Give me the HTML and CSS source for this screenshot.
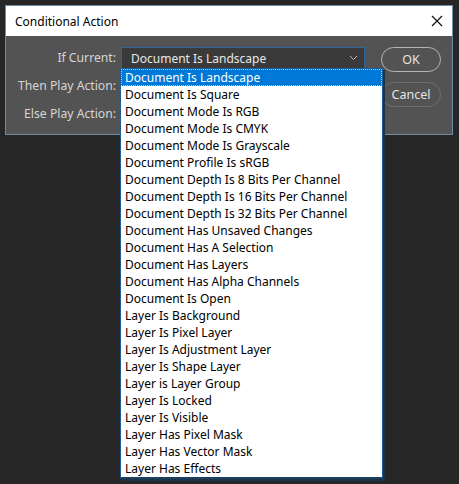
FILE: index.html
```html
<!DOCTYPE html>
<html>
<head>
<meta charset="utf-8">
<link rel="stylesheet" href="styles.css">
</head>
<body>
<div class="dialog">
  <div class="titlebar">
    <span class="title">Conditional Action</span>
    <svg class="close" width="12" height="12" viewBox="0 0 12 12"><path d="M1 1L11 11M11 1L1 11" stroke="#111" stroke-width="1.2" fill="none"/></svg>
  </div>
  <div class="body">
    <div class="form">
      <div class="row"><span class="label">If Current:</span>
        <div class="select"><span>Document Is Landscape</span>
          <svg class="chev" width="9" height="6" viewBox="0 0 9 6"><path d="M1 1L4.5 4.5L8 1" stroke="#bbb" stroke-width="1" fill="none"/></svg>
        </div>
      </div>
      <div class="row"><span class="label">Then Play Action:</span></div>
      <div class="row"><span class="label">Else Play Action:</span></div>
    </div>
    <div class="buttons">
      <div class="btn ok">OK</div>
      <div class="btn cancel">Cancel</div>
    </div>
  </div>
</div>
<ul class="list">
  <li class="sel">Document Is Landscape</li>
  <li>Document Is Square</li>
  <li>Document Mode Is RGB</li>
  <li>Document Mode Is CMYK</li>
  <li>Document Mode Is Grayscale</li>
  <li>Document Profile Is sRGB</li>
  <li>Document Depth Is 8 Bits Per Channel</li>
  <li>Document Depth Is 16 Bits Per Channel</li>
  <li>Document Depth Is 32 Bits Per Channel</li>
  <li>Document Has Unsaved Changes</li>
  <li>Document Has A Selection</li>
  <li>Document Has Layers</li>
  <li>Document Has Alpha Channels</li>
  <li>Document Is Open</li>
  <li>Layer Is Background</li>
  <li>Layer Is Pixel Layer</li>
  <li>Layer Is Adjustment Layer</li>
  <li>Layer Is Shape Layer</li>
  <li>Layer is Layer Group</li>
  <li>Layer Is Locked</li>
  <li>Layer Is Visible</li>
  <li>Layer Has Pixel Mask</li>
  <li>Layer Has Vector Mask</li>
  <li>Layer Has Effects</li>
</ul>
</body>
</html>
```

FILE: styles.css
```css
html, body {
  margin: 0;
  padding: 0;
  background: #262626;
  width: 459px;
  height: 484px;
  overflow: hidden;
  font-family: "Noto Sans", "DejaVu Sans", sans-serif;
}
.dialog {
  position: absolute;
  left: 5px;
  top: 5px;
  width: 446px;
  height: 128px;
  border: 1px solid #6f8ea6;
  background: #535353;
}
.titlebar {
  height: 30px;
  background: #ffffff;
  display: flex;
  align-items: center;
  justify-content: space-between;
  padding: 0 9px 0 9px;
}
.title {
  font-size: 12px;
  color: #000;
}
.body {
  display: flex;
  padding-top: 11px;
}
.form {
  width: 359px;
  flex-shrink: 0;
  display: flex;
  flex-direction: column;
}
.row {
  height: 28px;
  display: flex;
  align-items: flex-start;
}
.label {
  width: 110px;
  flex-shrink: 0;
  text-align: right;
  color: #d6d6d6;
  font-size: 12.2px;
  line-height: 21px;
}
.select {
  flex-shrink: 0;
  margin-left: 5px;
  width: 227px;
  height: 20px;
  border: 1px solid #2e66a0;
  background: #3a3a3a;
  color: #e8e8e8;
  font-size: 12px;
  display: flex;
  align-items: center;
  justify-content: space-between;
  padding: 0 6px 0 9px;
}
.buttons {
  margin-left: 16px;
  display: flex;
  flex-direction: column;
  gap: 10px;
}
.btn {
  width: 58px;
  height: 23px;
  border-radius: 13px;
  font-size: 12.5px;
  color: #e4e4e4;
  display: flex;
  align-items: center;
  justify-content: center;
}
.ok {
  border: 1px solid #b4b4b4;
}
.cancel {
  border: 1px solid #6e6e6e;
}
.list {
  position: absolute;
  left: 120px;
  top: 68px;
  width: 261px;
  margin: 0;
  padding: 0;
  list-style: none;
  background: #ffffff;
  border: 1px solid #1f5c9a;
  border-bottom: 2px solid #1a3f5f;
  box-shadow: 2px 2px 0 #1d3347;
}
.list li {
  height: 17px;
  line-height: 17px;
  font-size: 12px;
  color: #000;
  padding-left: 4px;
  white-space: nowrap;
}
.list li.sel {
  background: #0078d7;
  color: #fff;
  outline: 1px dotted #a8d0f0;
  outline-offset: -1px;
}
```
